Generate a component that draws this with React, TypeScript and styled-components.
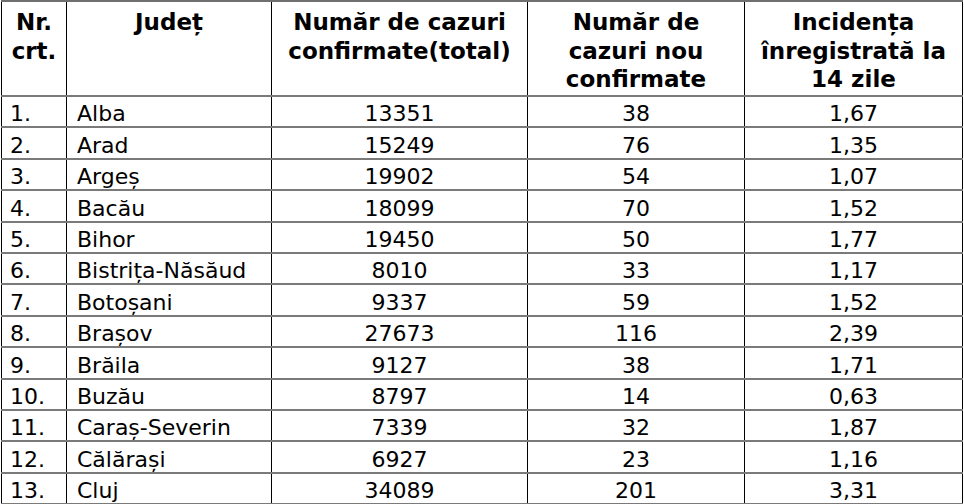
import { createGlobalStyle, styled } from "styled-components";

const GlobalStyle = createGlobalStyle`
  body {
    margin: 0;
    background: #ffffff;
    font-family: "DejaVu Sans", Verdana, sans-serif;
    color: #000000;
  }
`;

const Page = styled.div`
  padding: 0 0 0 1px;
`;

const Table = styled.table`
  border-collapse: collapse;
  table-layout: fixed;
  width: 961px;
`;

const HeadRow = styled.tr`
  height: 95px;
`;

const BodyRow = styled.tr`
  height: 31.4px;
`;

const HeadCell = styled.th`
  font-size: 23px;
  font-weight: 700;
  line-height: 28.5px;
  text-align: center;
  vertical-align: top;
  padding: 6px 2px 0;
  border-left: 1.5px solid #000;
  border-right: 1.5px solid #000;
  border-top: 2px solid #6f6f6f;
  border-bottom: 2px solid #7a7a7a;
  white-space: nowrap;
`;

const Cell = styled.td<{ $align?: "left" | "center"; $pad?: number }>`
  font-size: 22px;
  line-height: 25px;
  text-align: ${p => p.$align ?? "center"};
  vertical-align: bottom;
  padding: 0 0 0 ${p => p.$pad ?? 0}px;
  border-left: 1.5px solid #000;
  border-right: 1.5px solid #000;
  border-bottom: 2px solid #7a7a7a;
  white-space: nowrap;
`;

type Row = [string, string, number, number, string];

const rows: Row[] = [
  ["1.", "Alba", 13351, 38, "1,67"],
  ["2.", "Arad", 15249, 76, "1,35"],
  ["3.", "Argeș", 19902, 54, "1,07"],
  ["4.", "Bacău", 18099, 70, "1,52"],
  ["5.", "Bihor", 19450, 50, "1,77"],
  ["6.", "Bistrița-Năsăud", 8010, 33, "1,17"],
  ["7.", "Botoșani", 9337, 59, "1,52"],
  ["8.", "Brașov", 27673, 116, "2,39"],
  ["9.", "Brăila", 9127, 38, "1,71"],
  ["10.", "Buzău", 8797, 14, "0,63"],
  ["11.", "Caraș-Severin", 7339, 32, "1,87"],
  ["12.", "Călărași", 6927, 23, "1,16"],
  ["13.", "Cluj", 34089, 201, "3,31"],
];

export default function App() {
  return (
    <Page>
      <GlobalStyle />
      <Table>
        <colgroup>
          <col style={{ width: 65 }} />
          <col style={{ width: 205 }} />
          <col style={{ width: 256 }} />
          <col style={{ width: 217 }} />
          <col style={{ width: 218 }} />
        </colgroup>
        <thead>
          <HeadRow>
            <HeadCell>
              Nr.
              <br />
              crt.
            </HeadCell>
            <HeadCell>Județ</HeadCell>
            <HeadCell>
              Număr de cazuri
              <br />
              confirmate(total)
            </HeadCell>
            <HeadCell>
              Număr de
              <br />
              cazuri nou
              <br />
              confirmate
            </HeadCell>
            <HeadCell>
              Incidența
              <br />
              înregistrată la
              <br />
              14 zile
            </HeadCell>
          </HeadRow>
        </thead>
        <tbody>
          {rows.map(([nr, judet, total, nou, inc]) => (
            <BodyRow key={nr}>
              <Cell $align="left" $pad={8}>
                {nr}
              </Cell>
              <Cell $align="left" $pad={10}>
                {judet}
              </Cell>
              <Cell>{total}</Cell>
              <Cell>{nou}</Cell>
              <Cell>{inc}</Cell>
            </BodyRow>
          ))}
        </tbody>
      </Table>
    </Page>
  );
}
